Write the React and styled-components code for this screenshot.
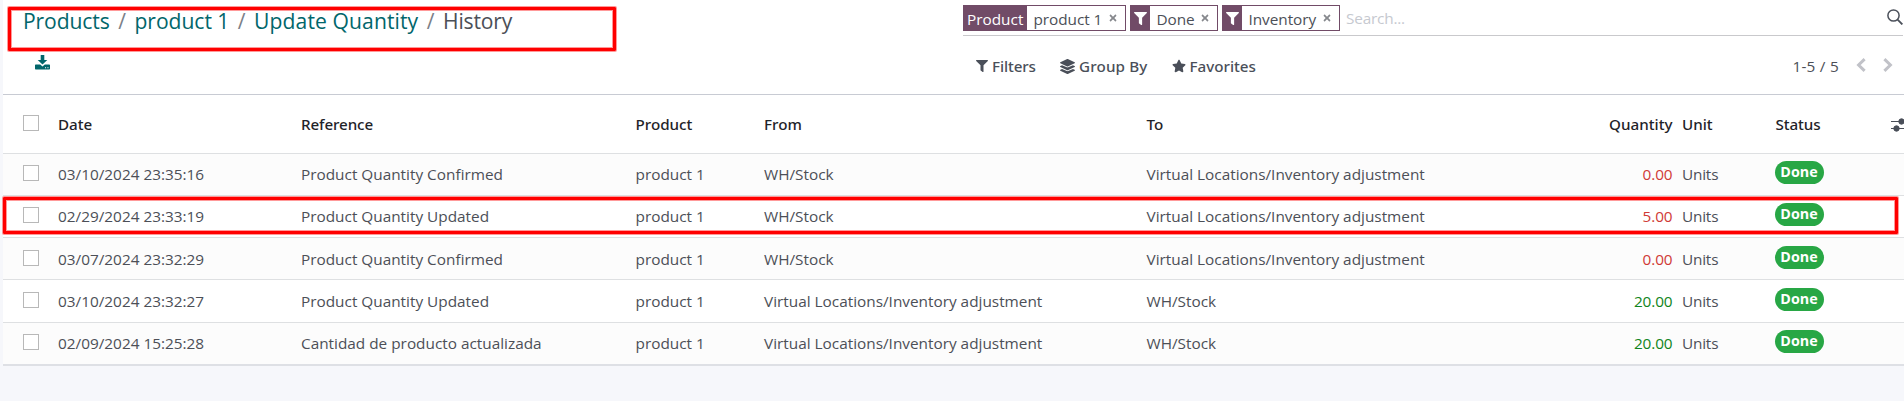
import React, { Fragment } from 'react';
import styled, { createGlobalStyle, css } from 'styled-components';
import { FaFilter, FaLayerGroup, FaStar, FaTimes } from 'react-icons/fa';

const GlobalStyle = createGlobalStyle`
  *, *::before, *::after { box-sizing: border-box; }
  body {
    margin: 0;
    overflow: hidden;
    background: #f6f7fb;
    color: #4c4f57;
    font-family: 'Open Sans', 'Noto Sans', sans-serif;
    font-size: 15.35px;
    line-height: 20px;
  }
`;

const Page = styled.div`
  min-height: 401px;
  padding-left: 3px;
`;

const ControlPanel = styled.header`
  position: relative;
  display: grid;
  grid-template-columns: 960px 1fr;
  height: 95px;
  background: #fff;
  border-bottom: 1px solid #c8cbd3;
`;

const Highlight = styled.div`
  position: absolute;
  pointer-events: none;
  border: 3px solid #f00;
  border-radius: 1px;
  box-shadow: 0 0 0 1px rgba(255, 0, 0, 0.4), inset 0 0 0 1px rgba(255, 0, 0, 0.4);
  ${(p) =>
    p.$area === 'breadcrumb'
      ? css`left: 5px; top: 7px; width: 608px; height: 44px;`
      : css`left: 0; top: 1px; width: 1895px; height: 37px;`}
`;

const PanelLeft = styled.div`
  display: flex;
  flex-direction: column;
  padding: 6px 0 0 20px;
`;

const Breadcrumb = styled.nav`
  display: flex;
  height: 30px;
  font-size: 21.1px;
  line-height: 30px;
  white-space: nowrap;
`;

const Crumb = styled.span`
  color: ${(p) => (p.$current ? '#4c4f57' : '#01666b')};
  letter-spacing: ${(p) => p.$tracking || 0};
`;

const Separator = styled.span`
  width: 24.8px;
  color: #7c8088;
  text-align: center;
`;

const ExportButton = styled.button`
  display: flex;
  margin: 19px 0 0 12px;
  padding: 0;
  border: 0;
  background: none;
  color: #01666b;
  width: 15px;
`;

const PanelRight = styled.div`
  display: flex;
  flex-direction: column;
`;

const SearchBar = styled.div`
  display: flex;
  align-items: flex-start;
  height: 36px;
  margin-right: 1px;
  padding-top: 5px;
  border-bottom: 1px solid #c9c9cc;
`;

const Facet = styled.div`
  display: flex;
  width: ${(p) => p.$width}px;
  height: 26px;
  margin-right: 4px;
  border: 1px solid #714b67;
  white-space: nowrap;
`;

const FacetLabel = styled.div`
  display: flex;
  align-items: center;
  justify-content: ${(p) => (p.$icon ? 'center' : 'flex-start')};
  width: ${(p) => (p.$icon ? 19 : 63)}px;
  padding: ${(p) => (p.$icon ? '0' : '2px 0 0 3px')};
  background: #714b67;
  color: #fff;
`;

const FacetValue = styled.div`
  display: flex;
  flex: 1;
  align-items: center;
  justify-content: space-between;
  padding: 2px 7px 0 6.5px;
  letter-spacing: -0.05px;

  svg { color: #86888d; margin-top: -3px; }
`;

const Placeholder = styled.span`
  flex: 1;
  padding: 3px 0 0 2px;
  color: #c6c9d0;
  letter-spacing: -0.2px;
`;

const SearchIcon = styled.svg`
  margin: 4px 0 0 0;
`;

const Actions = styled.div`
  display: flex;
  align-items: center;
  height: 60px;
  padding-left: 13px;
`;

const MenuButton = styled.button`
  display: flex;
  align-items: center;
  gap: ${(p) => p.$gap}px;
  width: ${(p) => p.$width}px;
  padding: 0;
  border: 0;
  background: none;
  color: #4a4f59;
  font: 500 15.2px/20px 'Noto Sans', sans-serif;
  letter-spacing: ${(p) => p.$tracking || 0};
  white-space: nowrap;
`;

const Pager = styled.div`
  display: flex;
  align-items: center;
  margin-left: auto;
  padding-right: 11px;
  letter-spacing: 0.25px;
  white-space: nowrap;
`;

const PagerArrow = styled.svg`
  margin: -3px 0 0 17px;
  color: #c1c2c8;
`;

const Table = styled.section`
  background: #fff;
  border-bottom: 2px solid #dee0e5;
`;

const Row = styled.div`
  position: relative;
  display: grid;
  grid-template-columns: 35px 243px 334.5px 128.5px 382.5px 400px 126px 102px 116px 1fr;
  align-items: center;
  height: ${(p) => p.$height}px;
  padding: ${(p) => (p.$lowered ? '1px 0 0 20px' : '0 0 1px 20px')};
  border-bottom: ${(p) => (p.$last ? 0 : 1)}px solid #dee0e2;
  background: ${(p) => (p.$striped ? '#fcfcfc' : '#fff')};
  white-space: nowrap;
`;

const HeaderRow = styled(Row)`
  color: #1f2329;
  font-family: 'Noto Sans', sans-serif;
  font-size: 15.2px;
  font-weight: 500;
`;

const Checkbox = styled.span`
  width: 16px;
  height: 16px;
  margin-top: -2px;
  border: 1px solid #b8b8b8;
  background: #fff;
`;

const HeadCell = styled.span`
  padding-left: ${(p) => p.$indent || 0}px;
  letter-spacing: ${(p) => p.$tracking || 0};
  text-align: ${(p) => (p.$right ? 'right' : 'left')};
`;

const OptionsIcon = styled.svg`
  margin: 3px 0 0 0;
`;

const Cell = styled.span``;

const Quantity = styled.span`
  color: ${(p) => (p.$positive ? '#0f8420' : '#d03a36')};
  letter-spacing: -0.1px;
  text-align: right;
`;

const Unit = styled.span`
  padding-left: 9.5px;
  letter-spacing: -0.2px;
`;

const Badge = styled.span`
  width: 49px;
  height: 23px;
  margin-top: -3px;
  border-radius: 12px;
  background: #28a745;
  color: #fff;
  font-size: 14.3px;
  font-weight: 700;
  line-height: 22px;
  text-align: center;
`;

const crumbs = [
  { label: 'Products', tracking: '-0.1px' },
  { label: 'product 1', tracking: '-0.05px' },
  { label: 'Update Quantity', tracking: '0.1px' },
  { label: 'History', tracking: '-0.2px' },
];

const moves = [
  { date: '03/10/2024 23:35:16', reference: 'Product Quantity Confirmed', incoming: false, qty: '0.00', height: 42 },
  { date: '02/29/2024 23:33:19', reference: 'Product Quantity Updated', incoming: false, qty: '5.00', height: 42, highlighted: true },
  { date: '03/07/2024 23:32:29', reference: 'Product Quantity Confirmed', incoming: false, qty: '0.00', height: 42, lowered: true },
  { date: '03/10/2024 23:32:27', reference: 'Product Quantity Updated', incoming: true, qty: '20.00', height: 43 },
  { date: '02/09/2024 15:25:28', reference: 'Cantidad de producto actualizada', incoming: true, qty: '20.00', height: 41 },
];

const STOCK = 'WH/Stock';
const ADJUSTMENT = 'Virtual Locations/Inventory adjustment';

function MoveRow({ move, index, last }) {
  return (
    <Row $height={move.height} $striped={index % 2 === 0} $lowered={move.lowered} $last={last}>
      <Checkbox />
      <Cell>{move.date}</Cell>
      <Cell>{move.reference}</Cell>
      <Cell>product 1</Cell>
      <Cell>{move.incoming ? ADJUSTMENT : STOCK}</Cell>
      <Cell>{move.incoming ? STOCK : ADJUSTMENT}</Cell>
      <Quantity $positive={move.incoming}>{move.qty}</Quantity>
      <Unit>Units</Unit>
      <Badge>Done</Badge>
      {move.highlighted && <Highlight $area="row" />}
    </Row>
  );
}

export default function App() {
  return (
    <Page>
      <GlobalStyle />
      <ControlPanel>
        <PanelLeft>
          <Breadcrumb>
            {crumbs.map((crumb, i) => (
              <Fragment key={crumb.label}>
                {i > 0 && <Separator>/</Separator>}
                <Crumb $tracking={crumb.tracking} $current={i === crumbs.length - 1}>{crumb.label}</Crumb>
              </Fragment>
            ))}
          </Breadcrumb>
          <ExportButton aria-label="Export">
            <svg width="15" height="15" viewBox="0 0 15 15" fill="currentColor">
              <path d="M5.7 0h3.6v4.9h3L7.5 9.6 2.7 4.9h3z" />
              <path fillRule="evenodd" d="M1 9.4h4.2l2.3 2 2.3-2H14c.6 0 1 .4 1 1v3.1c0 .6-.4 1-1 1H1c-.6 0-1-.4-1-1v-3.1c0-.6.4-1 1-1zM10 12.2v1h1.1v-1zm2.4 0v1h1.1v-1z" />
            </svg>
          </ExportButton>
        </PanelLeft>
        <PanelRight>
          <SearchBar>
            <Facet $width={163}>
              <FacetLabel>Product</FacetLabel>
              <FacetValue>product 1 <FaTimes size={10} /></FacetValue>
            </Facet>
            <Facet $width={88}>
              <FacetLabel $icon><FaFilter size={13} /></FacetLabel>
              <FacetValue>Done <FaTimes size={10} /></FacetValue>
            </Facet>
            <Facet $width={118}>
              <FacetLabel $icon><FaFilter size={13} /></FacetLabel>
              <FacetValue>Inventory <FaTimes size={10} /></FacetValue>
            </Facet>
            <Placeholder>Search...</Placeholder>
            <SearchIcon width="16" height="16" viewBox="0 0 16 16" fill="none" stroke="#4c515b" strokeWidth="1.5">
              <circle cx="6.5" cy="6.5" r="5.6" />
              <path d="M10.6 10.6l4.8 4.8" strokeWidth="1.9" />
            </SearchIcon>
          </SearchBar>
          <Actions>
            <MenuButton $gap={4} $width={84} $tracking="-0.1px"><FaFilter size={12} />Filters</MenuButton>
            <MenuButton $gap={4} $width={111.5} $tracking="0.15px"><FaLayerGroup size={15} />Group By</MenuButton>
            <MenuButton $gap={4} $width={100}><FaStar size={14} />Favorites</MenuButton>
            <Pager>
              1-5 / 5
              <PagerArrow width="10" height="14" viewBox="0 0 10 14" fill="none" stroke="currentColor" strokeWidth="3">
                <path d="M8.6 1.2L2.6 7l6 5.8" />
              </PagerArrow>
              <PagerArrow width="10" height="14" viewBox="0 0 10 14" fill="none" stroke="currentColor" strokeWidth="3">
                <path d="M1.4 1.2l6 5.8-6 5.8" />
              </PagerArrow>
            </Pager>
          </Actions>
        </PanelRight>
        <Highlight $area="breadcrumb" />
      </ControlPanel>
      <Table>
        <HeaderRow $height={59}>
          <Checkbox />
          <HeadCell>Date</HeadCell>
          <HeadCell $tracking="-0.1px">Reference</HeadCell>
          <HeadCell>Product</HeadCell>
          <HeadCell>From</HeadCell>
          <HeadCell>To</HeadCell>
          <HeadCell $right>Quantity</HeadCell>
          <HeadCell $indent={9.5}>Unit</HeadCell>
          <HeadCell $indent={1} $tracking="-0.1px">Status</HeadCell>
          <OptionsIcon width="16" height="14" viewBox="0 0 16 14" fill="#4a4f59" stroke="#4a4f59">
            <path d="M0 3.5h16M0 10.5h16" strokeWidth="1.2" />
            <circle cx="10.5" cy="3.5" r="2.7" />
            <circle cx="5.5" cy="10.5" r="2.7" />
          </OptionsIcon>
        </HeaderRow>
        {moves.map((move, i) => (
          <MoveRow key={i} move={move} index={i} last={i === moves.length - 1} />
        ))}
      </Table>
    </Page>
  );
}
